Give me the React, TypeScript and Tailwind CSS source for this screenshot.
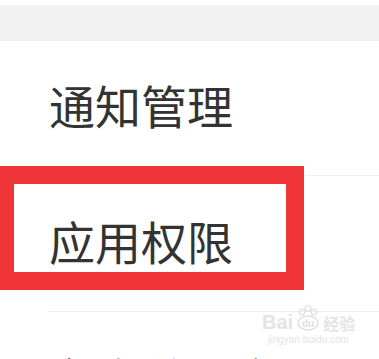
import React from "react";

const font = { fontFamily: '"Noto Sans CJK SC", "Noto Sans", sans-serif' };

export default function App() {
  return (
    <div className="relative w-[379px] h-[359px] overflow-hidden bg-white" style={font}>
      <div className="h-[5px] bg-white" />
      <div className="h-[36px] bg-[#f2f2f2]" />
      <div className="flex items-center pl-[49px] pb-[8px] h-[134px]">
        <span className="text-[46px] leading-none text-[#333333]">通知管理</span>
      </div>
      <div className="ml-[48px] h-px bg-[#efefef]" />
      <div className="flex items-center pl-[49px] pb-[8px] h-[135px]">
        <span className="text-[46px] leading-none text-[#333333]">应用权限</span>
      </div>
      <div className="ml-[48px] h-px bg-[#efefef]" />
      <div className="flex items-start pl-[49px] pt-[42px] h-[134px]">
        <span className="text-[46px] leading-none text-[#333333]">允许关联启动</span>
      </div>

      {/* red highlight box */}
      <div className="absolute left-[-4px] top-[166px] w-[308px] h-[124px] border-[18px] border-[#ef3538]" />

      {/* watermark */}
      <div className="absolute left-[262px] top-[304px] flex flex-col items-center text-[#e4e4e4]">
        <div className="flex items-end gap-[1px]">
          <span className="text-[20px] font-bold leading-none" style={{ fontFamily: '"Liberation Sans", sans-serif' }}>Bai</span>
          <svg width="28" height="28" viewBox="0 0 28 28">
            <circle cx="8" cy="8" r="2.8" fill="none" stroke="#e0e0e0" strokeWidth="1.3" />
            <circle cx="14" cy="4.5" r="2.8" fill="none" stroke="#e0e0e0" strokeWidth="1.3" />
            <circle cx="20" cy="8" r="2.8" fill="none" stroke="#e0e0e0" strokeWidth="1.3" />
            <ellipse cx="14" cy="19" rx="10" ry="7" fill="none" stroke="#e0e0e0" strokeWidth="1.5" />
            <text x="14" y="23" textAnchor="middle" fontSize="10" fontWeight="bold" fill="#e0e0e0" fontFamily="Liberation Sans, sans-serif">du</text>
          </svg>
          <span className="text-[16px] font-bold leading-none mb-[1px]">经验</span>
        </div>
        <span className="text-[10px] leading-none mt-[3px]" style={{ fontFamily: '"Liberation Sans", sans-serif' }}>jingyan.baidu.com</span>
      </div>
    </div>
  );
}
